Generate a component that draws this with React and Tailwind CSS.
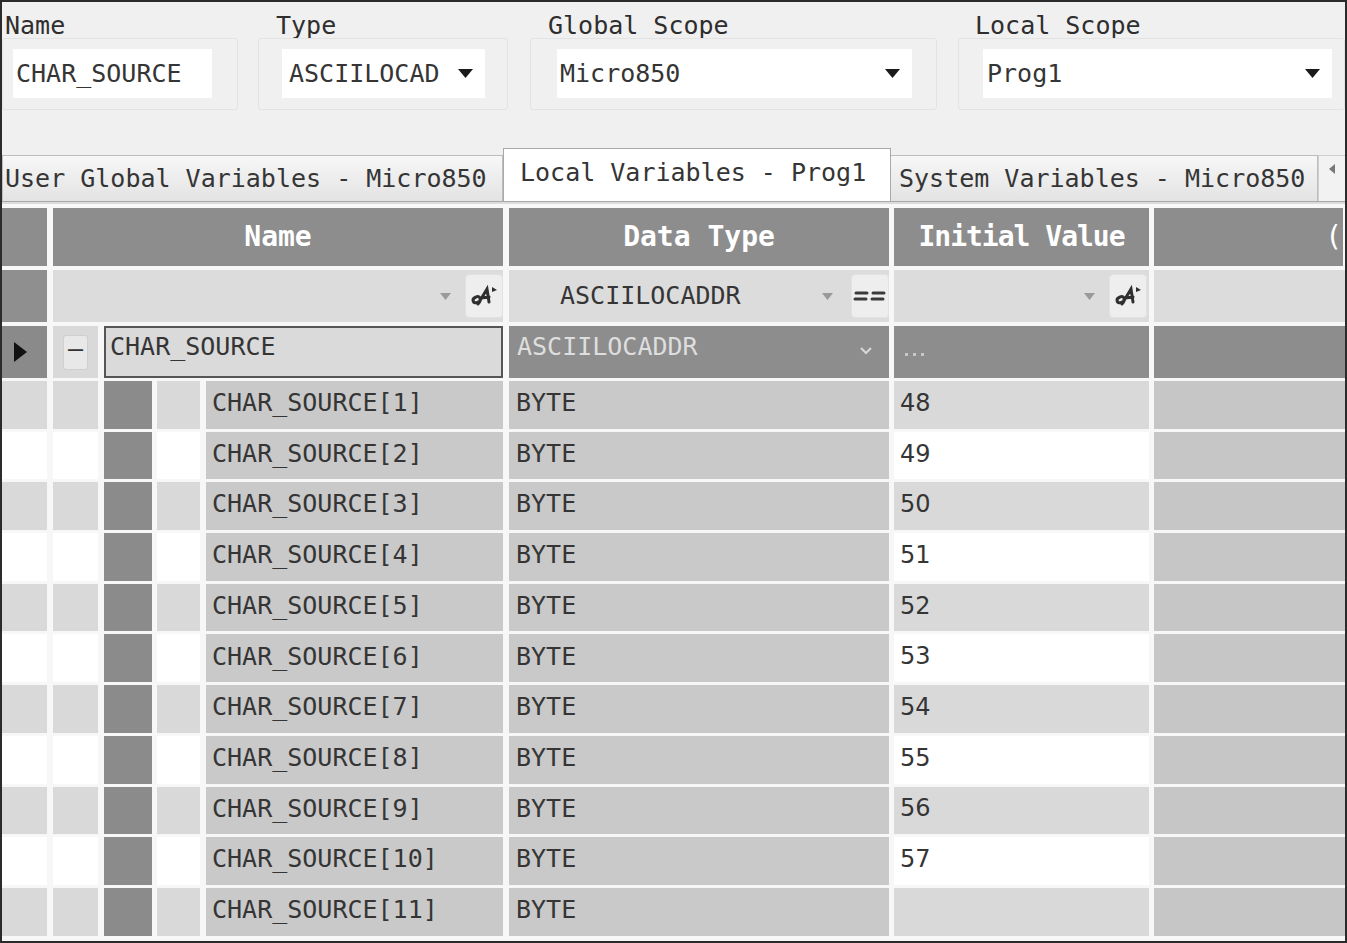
const MONO = "font-['DejaVu_Sans_Mono','Liberation_Mono',monospace]";

function DropArrow() {
  return (
    <svg width="15" height="9" viewBox="0 0 15 9" className="shrink-0">
      <polygon points="0,0 15,0 7.5,9" fill="#1a1a1a" />
    </svg>
  );
}

function FilterTri() {
  return (
    <svg width="11" height="7" viewBox="0 0 11 7">
      <polygon points="0,0 11,0 5.5,7" fill="#9a9a9a" />
    </svg>
  );
}

function ScriptA() {
  return (
    <div className="w-[38px] h-[44px] shrink-0 bg-[#eeeeee] border border-[#e2e2e2] rounded-sm flex items-center justify-center">
      <svg width="30" height="26" viewBox="0 0 30 26">
        <path
          d="M9 19 C 4 22, 2 16, 7 14 C 11 12, 13 17, 9 21 M9 21 L 18 6 L 20 19 M12 15 L 20 14"
          fill="none"
          stroke="#2f2f2f"
          strokeWidth="3"
          strokeLinecap="round"
        />
        <polygon points="23,4 28,7 23,9" fill="#2f2f2f" />
      </svg>
    </div>
  );
}

function EqButton() {
  return (
    <div className="w-[38px] h-[44px] shrink-0 bg-[#eeeeee] border border-[#e2e2e2] rounded-sm flex items-center justify-center">
      <svg width="34" height="14" viewBox="0 0 34 14">
        <g stroke="#3a3a3a" strokeWidth="3" strokeLinecap="round">
          <line x1="3" y1="4" x2="14" y2="4" />
          <line x1="2" y1="10" x2="13" y2="10" />
          <line x1="20" y1="4" x2="31" y2="4" />
          <line x1="19" y1="10" x2="30" y2="10" />
        </g>
      </svg>
    </div>
  );
}

function Group({ label, width, pad, inputW, value, arrow, arrowGap }) {
  return (
    <div className="flex flex-col shrink-0" style={{ width }}>
      <div className="h-[36px] pt-[11px] leading-[26px] text-[#2e2e2e]" style={{ paddingLeft: pad.label }}>
        {label}
      </div>
      <div className="h-[72px] border border-[#e3e3e3] rounded-[3px] pt-[10px]" style={{ paddingLeft: pad.input }}>
        <div className="h-[49px] bg-white flex items-center pr-[12px]" style={{ width: inputW, paddingLeft: pad.text }}>
          <span className="flex-1 whitespace-nowrap">{value}</span>
          {arrow && <span style={{ marginLeft: arrowGap }}><DropArrow /></span>}
        </div>
      </div>
    </div>
  );
}

const rows = Array.from({ length: 11 }, (_, i) => ({
  name: `CHAR_SOURCE[${i + 1}]`,
  value: i < 10 ? String(48 + i) : '',
}));

export default function App() {
  return (
    <div className={`w-[1347px] h-[943px] overflow-hidden bg-[#f0f0f0] border-2 border-[#2b2b2b] flex flex-col text-[25px] text-[#353535] ${MONO}`}>
      {/* top search fields */}
      <div className="h-[146px] flex shrink-0">
        <Group label="Name" width={236} pad={{ label: 3, input: 10, text: 3 }} inputW={199} value="CHAR_SOURCE" />
        <div className="w-[20px] shrink-0" />
        <Group label="Type" width={250} pad={{ label: 18, input: 23, text: 7 }} inputW={203} value="ASCIILOCAD" arrow arrowGap={4} />
        <div className="w-[22px] shrink-0" />
        <Group label="Global Scope" width={407} pad={{ label: 18, input: 26, text: 3 }} inputW={355} value="Micro850" arrow />
        <div className="w-[21px] shrink-0" />
        <Group label="Local Scope" width={387} pad={{ label: 17, input: 24, text: 4 }} inputW={349} value="Prog1" arrow />
      </div>

      {/* tabs */}
      <div className="h-[54px] flex items-end shrink-0 border-b border-[#a8a8a8] *:shrink-0">
        <div className="w-[501px] h-[46px] bg-gradient-to-b from-[#f7f7f7] to-[#e3e3e3] border border-b-0 border-[#bdbdbd] flex items-center pl-[2px] whitespace-nowrap">
          User Global Variables - Micro850
        </div>
        <div className="w-[388px] h-[53px] bg-white border border-b-0 border-[#a9a9a9] flex items-center pl-[16px] pb-[4px] whitespace-nowrap">
          Local Variables - Prog1
        </div>
        <div className="w-[427px] h-[46px] bg-gradient-to-b from-[#f7f7f7] to-[#e3e3e3] border border-b-0 border-l-0 border-[#bdbdbd] flex items-center pl-[8px] whitespace-nowrap">
          System Variables - Micro850
        </div>
        <div className="w-[28px] h-[46px] bg-[#f2f2f2] border border-b-0 border-[#cfcfcf] flex items-start justify-center pt-[8px]">
          <svg width="6" height="10" viewBox="0 0 6 10">
            <polygon points="6,0 6,10 0,5" fill="#777" />
          </svg>
        </div>
      </div>
      <div className="h-[6px] shrink-0 bg-[#f8f8f8] border-t-2 border-[#dcdcdc]" />

      {/* grid */}
      <div className="flex-1 bg-[#f7f7f7] flex flex-col">
        {/* header */}
        <div className="h-[58px] flex shrink-0 font-bold text-white text-[28px] *:shrink-0">
          <div className="w-[45px] bg-[#8d8d8d]" />
          <div className="w-[450px] ml-[6px] bg-[#8d8d8d] flex items-center justify-center">Name</div>
          <div className="w-[380px] ml-[6px] bg-[#8d8d8d] flex items-center justify-center">Data Type</div>
          <div className="w-[255px] ml-[5px] bg-[#8d8d8d] flex items-center justify-center tracking-[-1px]">Initial Value</div>
          <div className="w-[189px] ml-[5px] bg-[#8d8d8d] flex items-center justify-end pr-[1px] font-normal">(</div>
        </div>

        {/* filter row */}
        <div className="h-[52px] mt-[4px] flex shrink-0 *:shrink-0">
          <div className="w-[45px] bg-[#8f8f8f]" />
          <div className="w-[450px] ml-[6px] bg-[#dcdcdc] flex items-center justify-end gap-[14px]">
            <FilterTri />
            <ScriptA />
          </div>
          <div className="w-[380px] ml-[6px] bg-[#dcdcdc] flex items-center">
            <span className="pl-[51px] flex-1">ASCIILOCADDR</span>
            <span className="mr-[18px]"><FilterTri /></span>
            <EqButton />
          </div>
          <div className="w-[255px] ml-[5px] bg-[#dcdcdc] flex items-center justify-end gap-[14px] pr-[2px]">
            <FilterTri />
            <ScriptA />
          </div>
          <div className="w-[240px] ml-[5px] bg-[#dcdcdc]" />
        </div>

        {/* selected parent row */}
        <div className="h-[52px] mt-[4px] flex shrink-0 *:shrink-0">
          <div className="w-[45px] bg-[#8a8a8a] flex items-center pl-[12px]">
            <svg width="13" height="20" viewBox="0 0 13 20">
              <polygon points="0,0 13,10 0,20" fill="#111" />
            </svg>
          </div>
          <div className="w-[45px] ml-[6px] bg-[#d9d9d9] flex items-center pl-[10px]">
            <div className="w-[25px] h-[35px] bg-[#e8e8e8] border border-[#cfcfcf] rounded-[3px] flex items-center justify-center pb-[6px] text-[#333]">
              –
            </div>
          </div>
          <div className="w-[399px] ml-[6px] bg-[#dadada] border-2 border-[#555] pl-[4px] pt-[2px] leading-[34px]">
            CHAR_SOURCE
          </div>
          <div className="w-[380px] ml-[6px] bg-[#8d8d8d] flex items-start pl-[8px] pt-[4px] text-[#dedede] leading-[34px]">
            <span className="flex-1">ASCIILOCADDR</span>
            <svg width="14" height="9" viewBox="0 0 14 9" className="mt-[16px] mr-[16px]">
              <polyline points="2,2 7,7 12,2" fill="none" stroke="#d8d8d8" strokeWidth="2" />
            </svg>
          </div>
          <div className="w-[255px] ml-[5px] bg-[#8d8d8d] flex items-center pl-[11px] gap-[5px] pt-[4px]">
            <span className="w-[3px] h-[3px] bg-[#c8c8c8]" />
            <span className="w-[3px] h-[3px] bg-[#c8c8c8]" />
            <span className="w-[3px] h-[3px] bg-[#c8c8c8]" />
          </div>
          <div className="w-[240px] ml-[5px] bg-[#8d8d8d]" />
        </div>

        {/* child rows */}
        {rows.map((r, i) => {
          const light = i % 2 === 0 ? 'bg-[#d9d9d9]' : 'bg-white';
          return (
            <div key={r.name} className="h-[47.7px] mt-[3px] flex shrink-0 *:shrink-0">
              <div className={`w-[45px] ${light}`} />
              <div className={`w-[45px] ml-[6px] ${light}`} />
              <div className="w-[48px] ml-[6px] bg-[#8b8b8b]" />
              <div className={`w-[43px] ml-[5px] ${light}`} />
              <div className="w-[297px] ml-[6px] bg-[#c9c9c9] flex items-center pl-[6px] pb-[4px]">{r.name}</div>
              <div className="w-[380px] ml-[6px] bg-[#c9c9c9] flex items-center pl-[7px] pb-[4px]">BYTE</div>
              <div className={`w-[255px] ml-[5px] ${light} flex items-center pl-[6px] pb-[4px] font-['DejaVu_Sans',sans-serif] text-[24px]`}>
                {r.value}
              </div>
              <div className="w-[240px] ml-[5px] bg-[#c6c6c6]" />
            </div>
          );
        })}
      </div>
    </div>
  );
}
